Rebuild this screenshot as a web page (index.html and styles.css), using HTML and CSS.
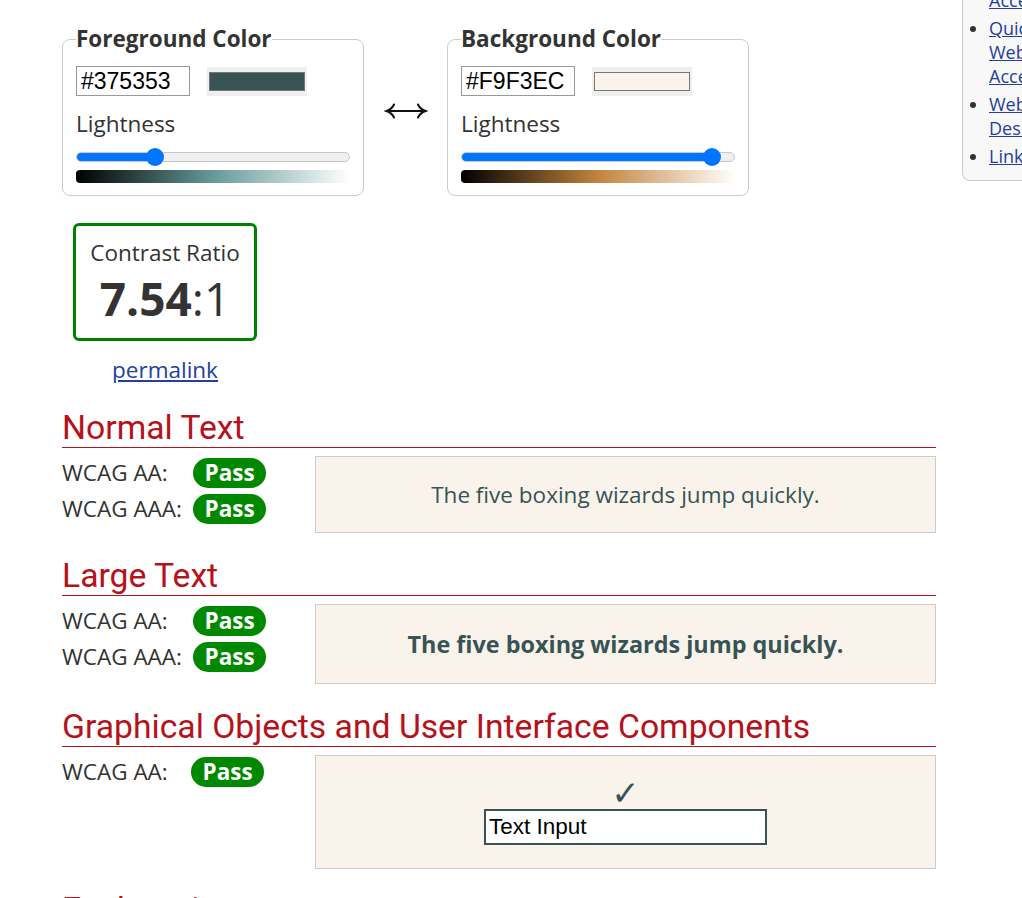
FILE: index.html
```html
<!DOCTYPE html>
<html lang="en">
<head>
<meta charset="utf-8">
<title>Contrast Checker</title>
<link rel="stylesheet" href="styles.css">
</head>
<body>
<div class="page">
  <main class="main">
    <div class="pickers">
      <fieldset class="picker">
        <legend>Foreground Color</legend>
        <div class="hexrow">
          <input class="hex" type="text" value="#375353" aria-label="Foreground hex">
          <span class="swatch"><span class="swatch-fill swatch-fg"></span></span>
        </div>
        <div class="light-label">Lightness</div>
        <input class="slider" type="range" min="0" max="100" value="27" style="--fill:79px" aria-label="Foreground lightness">
        <div class="grad grad-fg"></div>
      </fieldset>
      <div class="swap" aria-label="Swap colors">
        <svg width="44" height="18" viewBox="0 0 44 18" aria-hidden="true">
          <path d="M3 9 H41" fill="none" stroke="#111" stroke-width="2"/>
          <path d="M10 2.5 Q8 7 2.5 9 Q8 11 10 15.5" fill="none" stroke="#111" stroke-width="2" stroke-linecap="round"/>
          <path d="M34 2.5 Q36 7 41.5 9 Q36 11 34 15.5" fill="none" stroke="#111" stroke-width="2" stroke-linecap="round"/>
        </svg>
      </div>
      <fieldset class="picker">
        <legend>Background Color</legend>
        <div class="hexrow">
          <input class="hex" type="text" value="#F9F3EC" aria-label="Background hex">
          <span class="swatch"><span class="swatch-fill swatch-bg"></span></span>
        </div>
        <div class="light-label">Lightness</div>
        <input class="slider" type="range" min="0" max="100" value="95" style="--fill:252px" aria-label="Background lightness">
        <div class="grad grad-bg"></div>
      </fieldset>
    </div>

    <div class="ratio-wrap">
      <div class="ratio-box">
        <div class="ratio-label">Contrast Ratio</div>
        <div class="ratio-value"><b>7.54</b>:1</div>
      </div>
      <a class="permalink" href="#">permalink</a>
    </div>

    <section class="result">
      <h2>Normal Text</h2>
      <div class="result-body">
        <div class="checks">
          <div class="check"><span class="check-label">WCAG AA:</span><span class="pass">Pass</span></div>
          <div class="check"><span class="check-label">WCAG AAA:</span><span class="pass">Pass</span></div>
        </div>
        <div class="sample sample-normal">The five boxing wizards jump quickly.</div>
      </div>
    </section>

    <section class="result">
      <h2>Large Text</h2>
      <div class="result-body">
        <div class="checks">
          <div class="check"><span class="check-label">WCAG AA:</span><span class="pass">Pass</span></div>
          <div class="check"><span class="check-label">WCAG AAA:</span><span class="pass">Pass</span></div>
        </div>
        <div class="sample sample-large">The five boxing wizards jump quickly.</div>
      </div>
    </section>

    <section class="result">
      <h2>Graphical Objects and User Interface Components</h2>
      <div class="result-body">
        <div class="checks">
          <div class="check"><span class="check-label check-label-short">WCAG AA:</span><span class="pass">Pass</span></div>
        </div>
        <div class="sample sample-ui">
          <div class="ui-check">&#10003;</div>
          <input class="ui-input" type="text" value="Text Input" aria-label="Sample text input">
        </div>
      </div>
    </section>

    <section class="result result-last">
      <h2>Explanation</h2>
    </section>
  </main>

  <aside class="sidebar">
    <ul>
      <li><a href="#">Color Accessibility</a></li>
      <li><a href="#">Quick Web Accessibility</a></li>
      <li><a href="#">Web Design</a></li>
      <li><a href="#">Links</a></li>
    </ul>
  </aside>
</div>
</body>
</html>
```

FILE: styles.css
```css
html, body {
  overflow: hidden;
}

body {
  margin: 0;
  font-family: "Open Sans", "Liberation Sans", sans-serif;
  color: #333;
  background: #fff;
}

.page {
  display: flex;
  align-items: flex-start;
  padding-left: 62px;
}

.main {
  width: 874px;
  flex-shrink: 0;
  padding-top: 25px;
}

/* colour pickers */
.pickers {
  display: flex;
  align-items: center;
}

.picker {
  margin: 0;
  width: 302px;
  box-sizing: border-box;
  border: 1px solid #ccc;
  border-radius: 8px;
  padding: 13px 13px 12px 13px;
}

.picker legend {
  padding: 0;
  font-size: 22.5px;
  line-height: 28px;
  font-weight: 700;
  color: #333;
}

.hexrow {
  display: flex;
  align-items: flex-start;
  gap: 17px;
}

.hex {
  width: 114px;
  height: 30px;
  box-sizing: border-box;
  margin: 0;
  border: 1px solid #999;
  padding: 0 4px;
  font-family: "Liberation Sans", Arial, sans-serif;
  font-size: 23px;
  color: #000;
  background: #fff;
}

.swatch {
  display: block;
  margin-top: 1px;
  width: 100px;
  height: 29px;
  box-sizing: border-box;
  padding: 5px 2px;
  background: #efefef;
}

.swatch-fill {
  display: block;
  height: 19px;
  box-sizing: border-box;
  border: 1px solid #777;
}

.swatch-fg { background: #375353; }
.swatch-bg { background: #f9f3ec; }

.light-label {
  margin-top: 13px;
  font-size: 22.5px;
  line-height: 30px;
}

.slider {
  -webkit-appearance: none;
  appearance: none;
  display: block;
  width: 274px;
  height: 18px;
  margin: 9px 0 0;
  padding: 0;
  background: transparent;
}

.slider::-webkit-slider-runnable-track {
  height: 10px;
  box-sizing: border-box;
  border-radius: 5px;
  border: 1px solid #c8c8c8;
  background: linear-gradient(to right, #0075ff var(--fill), #efefef var(--fill));
}

.slider::-webkit-slider-thumb {
  -webkit-appearance: none;
  appearance: none;
  width: 18px;
  height: 18px;
  border-radius: 50%;
  background: #0075ff;
  border: none;
  margin-top: -5px;
}

.grad {
  margin-top: 4px;
  height: 13px;
  border-radius: 4px;
}

.grad-fg {
  background: linear-gradient(to right, #000, hsl(180, 20%, 50%), #fff);
}

.grad-bg {
  background: linear-gradient(to right, #000, hsl(32, 52%, 50%), #fff);
}

.swap {
  width: 83px;
  display: flex;
  justify-content: center;
  align-items: center;
}

.swap svg {
  display: block;
}

/* ratio */
.ratio-wrap {
  width: 184px;
  margin: 27px 0 0 11px;
  text-align: center;
}

.ratio-box {
  border: 3px solid #008000;
  border-radius: 6px;
  padding: 12px 0 14px;
}

.ratio-label {
  font-size: 22.5px;
  line-height: 30px;
}

.ratio-value {
  margin-top: 4px;
  font-size: 46px;
  line-height: 52px;
}

.ratio-value b {
  font-weight: 700;
}

.permalink {
  display: inline-block;
  margin-top: 14px;
  font-size: 22.5px;
  line-height: 30px;
  color: #24409c;
}

/* results */
.result {
  margin-top: 24px;
}

.result-last {
  margin-top: 22px;
}

.result h2 {
  margin: 0;
  font-family: Roboto, "Liberation Sans", sans-serif;
  font-weight: 400;
  font-size: 33.7px;
  line-height: 38px;
  color: #b5121b;
  border-bottom: 1px solid #b5121b;
}

.result-body {
  display: grid;
  grid-template-columns: 253px 1fr;
  align-items: start;
  margin-top: 8px;
}

.check {
  display: flex;
  align-items: center;
  height: 36px;
}

.check:first-child {
  margin-top: -1px;
}

.check-label {
  width: 131px;
  flex-shrink: 0;
  font-size: 22.5px;
  line-height: 30px;
}

.check-label-short {
  width: 129px;
}

.pass {
  display: inline-block;
  background: #008800;
  color: #fff;
  font-weight: 700;
  font-size: 22.5px;
  line-height: 30px;
  padding: 0 11.5px;
  border-radius: 15px;
}

.sample {
  background: #f9f3ec;
  border: 1px solid #ccc;
  color: #375353;
  text-align: center;
  padding: 22px 10px;
}

.sample-normal {
  font-size: 22.5px;
  line-height: 31px;
}

.sample-large {
  font-size: 23.4px;
  line-height: 34px;
  font-weight: 700;
}

.sample-ui {
  padding-bottom: 23px;
}

.ui-check {
  font-family: "DejaVu Sans", sans-serif;
  font-size: 34px;
  line-height: 31px;
  color: #375353;
}

.ui-input {
  display: block;
  margin: 0 auto;
  width: 283px;
  height: 36px;
  box-sizing: border-box;
  border: 2px solid #375353;
  padding: 0 3px;
  font-family: "Liberation Sans", Arial, sans-serif;
  font-size: 22.5px;
  color: #000;
  background: #fff;
}

/* sidebar */
.sidebar {
  flex-shrink: 0;
  width: 160px;
  margin-left: 26px;
  margin-top: -46px;
  padding: 10px 0 8px;
  background: #f8f8f8;
  border-left: 1px solid #ccc;
  border-bottom: 1px solid #ccc;
  border-bottom-left-radius: 8px;
}

.sidebar ul {
  margin: 0;
  padding: 0 0 0 26px;
  width: 80px;
  font-size: 18px;
  line-height: 24px;
}

.sidebar li {
  margin-bottom: 4px;
}

.sidebar a {
  color: #24409c;
}
```
